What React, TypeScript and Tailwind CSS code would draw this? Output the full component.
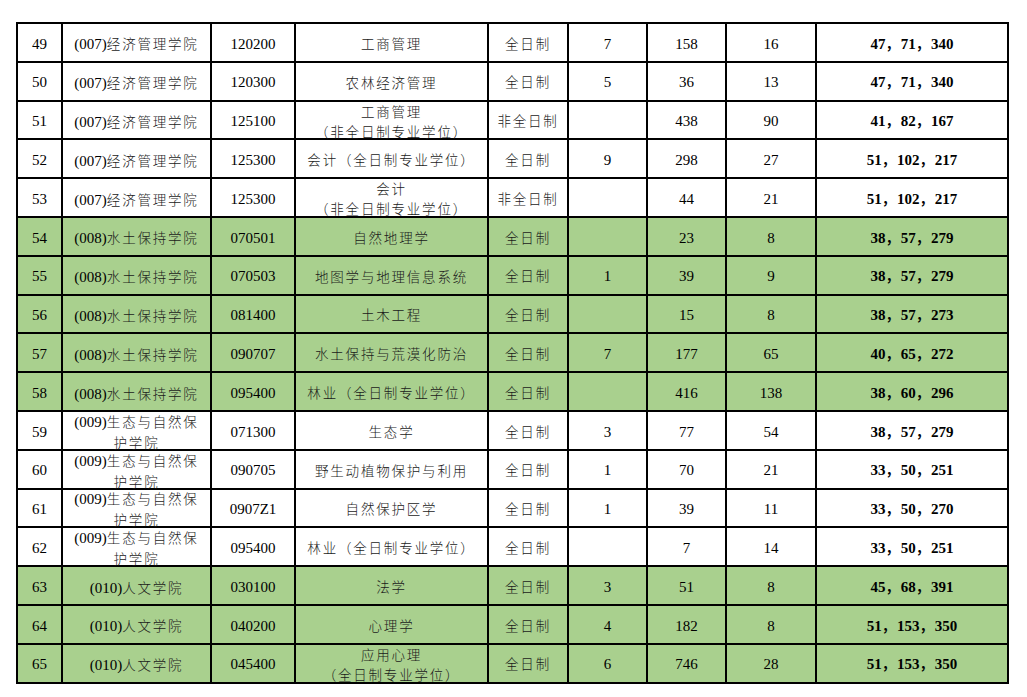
import React from 'react';

type Row = {
  no: string;
  school: string[];
  code: string;
  major: string[];
  mode: string;
  a: string;
  b: string;
  c: string;
  score: string;
  green?: boolean;
};

const S7 = ['(007)经济管理学院'];
const S8 = ['(008)水土保持学院'];
const S9 = ['(009)生态与自然保', '护学院'];
const S10 = ['(010)人文学院'];

const rows: Row[] = [
  { no: '49', school: S7, code: '120200', major: ['工商管理'], mode: '全日制', a: '7', b: '158', c: '16', score: '47，71，340' },
  { no: '50', school: S7, code: '120300', major: ['农林经济管理'], mode: '全日制', a: '5', b: '36', c: '13', score: '47，71，340' },
  { no: '51', school: S7, code: '125100', major: ['工商管理', '（非全日制专业学位）'], mode: '非全日制', a: '', b: '438', c: '90', score: '41，82，167' },
  { no: '52', school: S7, code: '125300', major: ['会计（全日制专业学位）'], mode: '全日制', a: '9', b: '298', c: '27', score: '51，102，217' },
  { no: '53', school: S7, code: '125300', major: ['会计', '（非全日制专业学位）'], mode: '非全日制', a: '', b: '44', c: '21', score: '51，102，217' },
  { no: '54', school: S8, code: '070501', major: ['自然地理学'], mode: '全日制', a: '', b: '23', c: '8', score: '38，57，279', green: true },
  { no: '55', school: S8, code: '070503', major: ['地图学与地理信息系统'], mode: '全日制', a: '1', b: '39', c: '9', score: '38，57，279', green: true },
  { no: '56', school: S8, code: '081400', major: ['土木工程'], mode: '全日制', a: '', b: '15', c: '8', score: '38，57，273', green: true },
  { no: '57', school: S8, code: '090707', major: ['水土保持与荒漠化防治'], mode: '全日制', a: '7', b: '177', c: '65', score: '40，65，272', green: true },
  { no: '58', school: S8, code: '095400', major: ['林业（全日制专业学位）'], mode: '全日制', a: '', b: '416', c: '138', score: '38，60，296', green: true },
  { no: '59', school: S9, code: '071300', major: ['生态学'], mode: '全日制', a: '3', b: '77', c: '54', score: '38，57，279' },
  { no: '60', school: S9, code: '090705', major: ['野生动植物保护与利用'], mode: '全日制', a: '1', b: '70', c: '21', score: '33，50，251' },
  { no: '61', school: S9, code: '0907Z1', major: ['自然保护区学'], mode: '全日制', a: '1', b: '39', c: '11', score: '33，50，270' },
  { no: '62', school: S9, code: '095400', major: ['林业（全日制专业学位）'], mode: '全日制', a: '', b: '7', c: '14', score: '33，50，251' },
  { no: '63', school: S10, code: '030100', major: ['法学'], mode: '全日制', a: '3', b: '51', c: '8', score: '45，68，391', green: true },
  { no: '64', school: S10, code: '040200', major: ['心理学'], mode: '全日制', a: '4', b: '182', c: '8', score: '51，153，350', green: true },
  { no: '65', school: S10, code: '045400', major: ['应用心理', '（全日制专业学位）'], mode: '全日制', a: '6', b: '746', c: '28', score: '51，153，350', green: true },
];

// CJK runs are set smaller and spaced out, like the Song face in the source sheet
function Mixed({ text, bold }: { text: string; bold?: boolean }) {
  const parts = text.split(/([\u3000-\u9fff\uff00-\uffef]+)/);
  return (
    <span>
      {parts.map((p, i) =>
        i % 2 === 1 ? (
          <span
            key={i}
            className={
              "font-['Noto_Sans_CJK_SC',sans-serif] text-[13.5px] tracking-[1.8px] " +
              (bold ? 'font-bold text-black' : 'font-light text-[#1a1a1a]')
            }
          >
            {p}
          </span>
        ) : (
          <span key={i}>{p}</span>
        )
      )}
    </span>
  );
}

function Cell({ children, className = '' }: { children?: React.ReactNode; className?: string }) {
  return (
    <td className={'border-2 border-black p-0 text-center align-middle h-[38.8px] ' + className}>
      <div className="h-[36.8px] pt-[3px] flex flex-col items-center justify-center whitespace-nowrap">{children}</div>
    </td>
  );
}

function Lines({ lines, leading }: { lines: string[]; leading: string }) {
  return (
    <>
      {lines.map((l, i) => (
        <div key={i} className={leading}>
          <Mixed text={l} />
        </div>
      ))}
    </>
  );
}

export default function App() {
  return (
    <div className="bg-white w-[1027px] h-[697px] pt-[22px] pl-[16px] font-['Liberation_Serif',serif] text-[15px] text-black">
      <table className="border-collapse table-fixed w-[991px]">
        <colgroup>
          <col className="w-[45px]" />
          <col className="w-[149px]" />
          <col className="w-[84px]" />
          <col className="w-[193px]" />
          <col className="w-[80px]" />
          <col className="w-[79px]" />
          <col className="w-[79px]" />
          <col className="w-[90px]" />
          <col className="w-[192px]" />
        </colgroup>
        <tbody>
          {rows.map((r) => (
            <tr key={r.no} className={r.green ? 'bg-[#a9d08e]' : 'bg-white'}>
              <Cell>{r.no}</Cell>
              <Cell>
                <Lines lines={r.school} leading="leading-[20px]" />
              </Cell>
              <Cell>{r.code}</Cell>
              <Cell>
                <Lines lines={r.major} leading="leading-[19px]" />
              </Cell>
              <Cell>
                <Mixed text={r.mode} />
              </Cell>
              <Cell>{r.a}</Cell>
              <Cell>{r.b}</Cell>
              <Cell>{r.c}</Cell>
              <Cell className="font-bold">
                <Mixed text={r.score} bold />
              </Cell>
            </tr>
          ))}
        </tbody>
      </table>
    </div>
  );
}
